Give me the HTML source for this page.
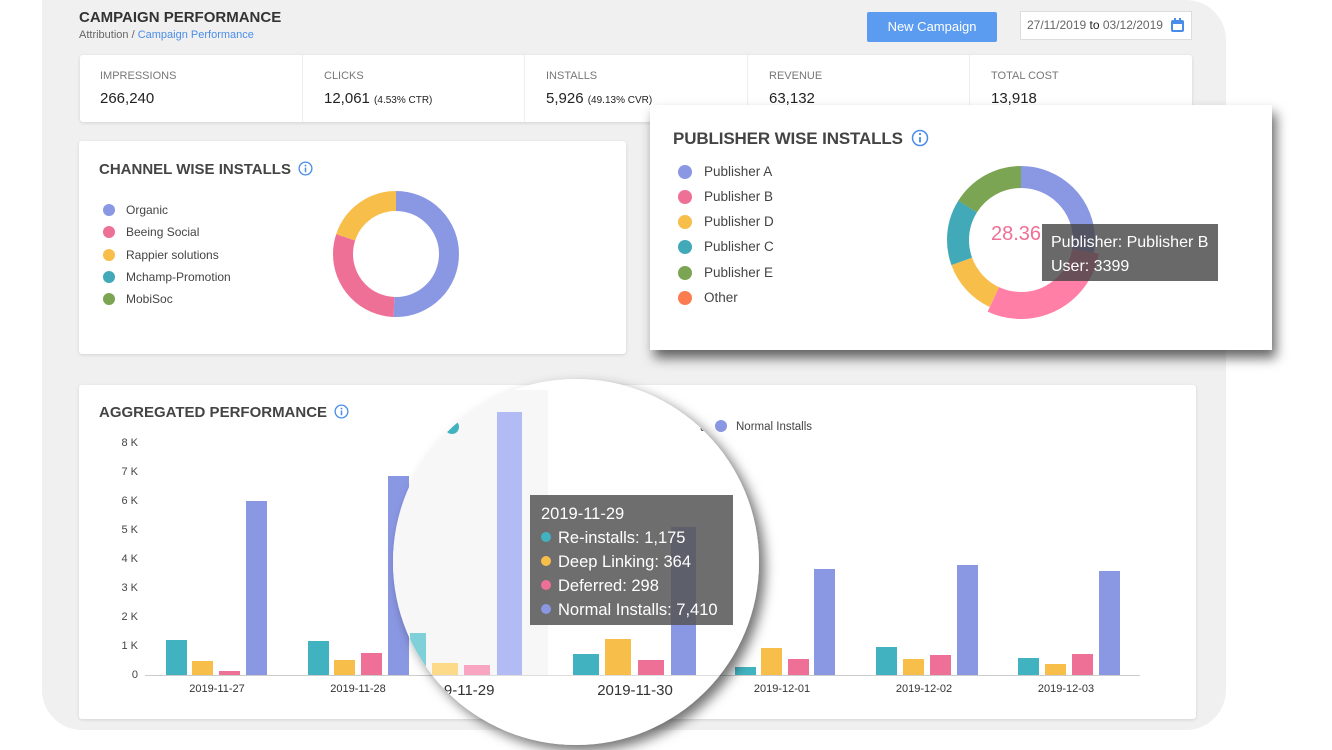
<!DOCTYPE html>
<html><head><meta charset="utf-8"><style>
*{margin:0;padding:0;box-sizing:border-box}
body{width:1332px;height:750px;background:#fff;font-family:"Liberation Sans",sans-serif;position:relative;overflow:hidden;color:#333}
.bg{position:absolute;left:42px;top:0;width:1184px;height:730px;background:#f0f0f0;border-radius:0 40px 40px 40px}
.a{position:absolute}
.card{position:absolute;background:#fff;border-radius:3px;box-shadow:0 1px 3px rgba(0,0,0,.12)}
.lbl{font-size:11px;color:#777;position:absolute;top:15px}
.val{font-size:15px;color:#222;position:absolute;top:35px}
.val small{font-size:10px}
.h{font-weight:bold;color:#444;font-size:15px;position:absolute}
.leg{position:absolute;font-family:"Liberation Sans",sans-serif;font-size:12px;color:#444}
.leg div{height:22.3px;display:flex;align-items:center}
.leg i{display:inline-block;width:12px;height:12px;border-radius:50%;margin-right:11px}
</style></head><body>
<div class="bg"></div>
<div class="a" style="left:79px;top:9px;font-size:15px;font-weight:bold;color:#333">CAMPAIGN PERFORMANCE</div>
<div class="a" style="left:79px;top:29px;font-size:11px;color:#666">Attribution / <span style="color:#4a8de8">Campaign Performance</span></div>
<div class="a" style="left:867px;top:12px;width:130px;height:30px;background:#5b9cf0;color:#fff;font-size:13px;text-align:center;line-height:30px;border-radius:2px">New Campaign</div>
<div class="a" style="left:1020px;top:11px;width:172px;height:29px;background:#fff;border:1px solid #ddd;font-size:12px;color:#666;line-height:27px;padding-left:6px">27/11/2019 <span style="color:#222">to</span> 03/12/2019
<svg style="position:absolute;right:6px;top:6px" width="15" height="15" viewBox="0 0 15 15"><rect x="1" y="2" width="13" height="12" rx="2" fill="#4a8de8"/><rect x="3" y="6" width="9" height="6" fill="#fff"/><rect x="4" y="0" width="2" height="4" fill="#4a8de8"/><rect x="9" y="0" width="2" height="4" fill="#4a8de8"/></svg></div>

<div class="card" style="left:80px;top:55px;width:1112px;height:67px">
<div style="position:absolute;left:222px;top:0;bottom:0;border-left:1px solid #eee"></div>
<div style="position:absolute;left:444px;top:0;bottom:0;border-left:1px solid #eee"></div>
<div style="position:absolute;left:667px;top:0;bottom:0;border-left:1px solid #eee"></div>
<div style="position:absolute;left:889px;top:0;bottom:0;border-left:1px solid #eee"></div>
<span class="lbl" style="left:20px">IMPRESSIONS</span><span class="val" style="left:20px">266,240</span>
<span class="lbl" style="left:244px">CLICKS</span><span class="val" style="left:244px">12,061 <small>(4.53% CTR)</small></span>
<span class="lbl" style="left:466px">INSTALLS</span><span class="val" style="left:466px">5,926 <small>(49.13% CVR)</small></span>
<span class="lbl" style="left:689px">REVENUE</span><span class="val" style="left:689px">63,132</span>
<span class="lbl" style="left:911px">TOTAL COST</span><span class="val" style="left:911px">13,918</span>
</div>

<div class="card" style="left:79px;top:141px;width:547px;height:213px">
<div class="h" style="left:20px;top:20px">CHANNEL WISE INSTALLS <svg width="15" height="15" viewBox="0 0 16 16" style="vertical-align:-2px;margin-left:3px"><circle cx="8" cy="8" r="6.8" fill="none" stroke="#4a8de8" stroke-width="1.4"/><rect x="7.2" y="7" width="1.6" height="5" fill="#4a8de8"/><circle cx="8" cy="4.8" r="1" fill="#4a8de8"/></svg></div>
<div class="leg" style="left:24px;top:58px"><div><i style="background:#8a97e3"></i>Organic</div><div><i style="background:#ee7096"></i>Beeing Social</div><div><i style="background:#f8be4a"></i>Rappier solutions</div><div><i style="background:#41a9b8"></i>Mchamp-Promotion</div><div><i style="background:#7ca553"></i>MobiSoc</div></div>
<svg class="a" style="left:0;top:0" width="547" height="213"><g transform="translate(317,113) rotate(-90)" fill="none" stroke-width="20">
<circle r="53" stroke="#8a97e3" stroke-dasharray="168.4 333" stroke-dashoffset="0"/>
<circle r="53" stroke="#ee7096" stroke-dasharray="98.1 333" stroke-dashoffset="-168.4"/>
<circle r="53" stroke="#f8be4a" stroke-dasharray="66.6 333" stroke-dashoffset="-266.5"/></g></svg>
</div>

<div class="card" style="left:79px;top:385px;width:1117px;height:334px">
<div class="h" style="left:20px;top:19px">AGGREGATED PERFORMANCE <svg width="15" height="15" viewBox="0 0 16 16" style="vertical-align:-2px;margin-left:3px"><circle cx="8" cy="8" r="6.8" fill="none" stroke="#4a8de8" stroke-width="1.4"/><rect x="7.2" y="7" width="1.6" height="5" fill="#4a8de8"/><circle cx="8" cy="4.8" r="1" fill="#4a8de8"/></svg></div>
</div>

<svg class="a" style="left:0;top:0" width="1332" height="750" font-family="Liberation Sans, sans-serif">
<g font-size="11" fill="#444" text-anchor="end">
<text x="138" y="446">8 K</text><text x="138" y="475">7 K</text><text x="138" y="504">6 K</text><text x="138" y="533">5 K</text><text x="138" y="562">4 K</text><text x="138" y="591">3 K</text><text x="138" y="620">2 K</text><text x="138" y="649">1 K</text><text x="138" y="678">0</text></g>
<line x1="145" y1="675.5" x2="1140" y2="675.5" stroke="#ccc"/>
<circle cx="721" cy="426" r="6" fill="#8a97e3"/><text x="736" y="430" font-size="11.5" fill="#444">Normal Installs</text>
<g>
<rect x="166" y="640" width="21" height="35" fill="#41b3c0"/><rect x="192" y="661" width="21" height="14" fill="#f8be4a"/><rect x="219" y="671" width="21" height="4" fill="#ee7096"/><rect x="246" y="501" width="21" height="174" fill="#8a97e3"/>
<rect x="308" y="641" width="21" height="34" fill="#41b3c0"/><rect x="334" y="660" width="21" height="15" fill="#f8be4a"/><rect x="361" y="653" width="21" height="22" fill="#ee7096"/><rect x="388" y="476" width="21" height="199" fill="#8a97e3"/>
<rect x="735" y="667" width="21" height="8" fill="#41b3c0"/><rect x="761" y="648" width="21" height="27" fill="#f8be4a"/><rect x="788" y="659" width="21" height="16" fill="#ee7096"/><rect x="814" y="569" width="21" height="106" fill="#8a97e3"/>
<rect x="876" y="647" width="21" height="28" fill="#41b3c0"/><rect x="903" y="659" width="21" height="16" fill="#f8be4a"/><rect x="930" y="655" width="21" height="20" fill="#ee7096"/><rect x="957" y="565" width="21" height="110" fill="#8a97e3"/>
<rect x="1018" y="658" width="21" height="17" fill="#41b3c0"/><rect x="1045" y="664" width="21" height="11" fill="#f8be4a"/><rect x="1072" y="654" width="21" height="21" fill="#ee7096"/><rect x="1099" y="571" width="21" height="104" fill="#8a97e3"/>
</g>
<g font-size="11" fill="#333" text-anchor="middle"><text x="217" y="692">2019-11-27</text><text x="358" y="692">2019-11-28</text><text x="782" y="692">2019-12-01</text><text x="924" y="692">2019-12-02</text><text x="1066" y="692">2019-12-03</text></g>
<defs><filter id="sh" x="-20%" y="-20%" width="150%" height="150%"><feDropShadow dx="6" dy="6" stdDeviation="6" flood-color="#000" flood-opacity=".55"/></filter>
<clipPath id="cc"><circle cx="576" cy="562" r="183"/></clipPath>
<filter id="sh2" x="-10%" y="-10%" width="130%" height="140%"><feDropShadow dx="4" dy="8" stdDeviation="6" flood-color="#000" flood-opacity=".6"/></filter></defs>
<circle cx="576" cy="562" r="183" fill="#fff" filter="url(#sh)"/>
<g clip-path="url(#cc)">
<rect x="393" y="390" width="155" height="285" fill="#f7f7f7"/>
<line x1="393" y1="675.5" x2="760" y2="675.5" stroke="#ddd"/>
<rect x="410" y="633" width="16" height="42" fill="#7fd0d8"/><rect x="432" y="663" width="26" height="12" fill="#fdd98a"/><rect x="464" y="665" width="26" height="10" fill="#f7a5c0"/><rect x="497" y="412" width="25" height="263" fill="#b3bbf5"/>
<rect x="573" y="654" width="26" height="21" fill="#41b3c0"/><rect x="605" y="639" width="26" height="36" fill="#f8be4a"/><rect x="638" y="660" width="26" height="15" fill="#ee7096"/><rect x="671" y="527" width="25" height="148" fill="#8a97e3"/>
<rect x="733" y="668" width="21" height="7" fill="#41b3c0"/><rect x="761" y="648" width="21" height="27" fill="#f8be4a"/>
<circle cx="452" cy="427" r="7" fill="#41b3c0"/><text x="700" y="431" font-size="12" fill="#444">d</text>
<text x="465" y="695" font-size="15" fill="#333" text-anchor="middle">19-11-29</text>
<text x="635" y="695" font-size="15" fill="#333" text-anchor="middle">2019-11-30</text>
</g>
<rect x="530" y="495" width="203" height="130" fill="#555" fill-opacity=".85"/>
<g font-size="16.5" fill="#fff"><text x="541" y="519">2019-11-29</text>
<circle cx="546" cy="537" r="5" fill="#41b3c0"/><text x="558" y="543">Re-installs: 1,175</text>
<circle cx="546" cy="561" r="5" fill="#f8be4a"/><text x="558" y="567">Deep Linking: 364</text>
<circle cx="546" cy="585" r="5" fill="#ee7096"/><text x="558" y="591">Deferred: 298</text>
<circle cx="546" cy="609" r="5" fill="#8a97e3"/><text x="558" y="615">Normal Installs: 7,410</text></g>

<rect x="650" y="105" width="622" height="245" fill="#fff" filter="url(#sh2)"/>
<text x="673" y="144" font-size="17" font-weight="bold" fill="#444" textLength="230">PUBLISHER WISE INSTALLS</text>
<circle cx="920" cy="138" r="7.5" fill="none" stroke="#4a8de8" stroke-width="1.5"/><rect x="919.1" y="137" width="1.8" height="5.5" fill="#4a8de8"/><circle cx="920" cy="134" r="1.1" fill="#4a8de8"/>
<g font-size="13.5" fill="#444">
<circle cx="685" cy="172" r="7" fill="#8a97e3"/><text x="704" y="176">Publisher A</text>
<circle cx="685" cy="197" r="7" fill="#ee7096"/><text x="704" y="201">Publisher B</text>
<circle cx="685" cy="222" r="7" fill="#f8be4a"/><text x="704" y="226">Publisher D</text>
<circle cx="685" cy="247" r="7" fill="#41a9b8"/><text x="704" y="251">Publisher C</text>
<circle cx="685" cy="273" r="7" fill="#7ca553"/><text x="704" y="277">Publisher E</text>
<circle cx="685" cy="298" r="7" fill="#fb7c50"/><text x="704" y="302">Other</text></g>
<g transform="translate(1021,240) rotate(-90)" fill="none">
<circle r="63" stroke="#8a97e3" stroke-width="22" stroke-dasharray="110 396"/>
<circle r="65.5" stroke="#ff7fa6" stroke-width="27" stroke-dasharray="120 412" stroke-dashoffset="-114.3"/>
<circle r="63" stroke="#f8be4a" stroke-width="22" stroke-dasharray="49.5 396" stroke-dashoffset="-225.4"/>
<circle r="63" stroke="#41a9b8" stroke-width="22" stroke-dasharray="57.2 396" stroke-dashoffset="-274.9"/>
<circle r="63" stroke="#7ca553" stroke-width="22" stroke-dasharray="63.8 396" stroke-dashoffset="-332"/></g>
<text x="991" y="240" font-size="20" fill="#ee7096">28.36</text>
<rect x="1042" y="224" width="176" height="57" fill="#444" fill-opacity=".8"/>
<g font-size="16" fill="#fff"><text x="1051" y="247">Publisher: Publisher B</text><text x="1051" y="271">User: 3399</text></g>
</svg>
</body></html>
